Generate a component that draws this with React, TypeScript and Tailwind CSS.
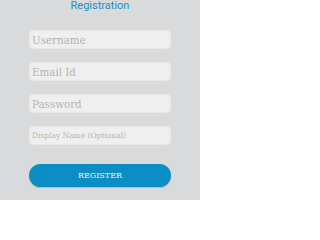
export default function App() {
  const fields = [
    { ph: 'Username', size: 'text-[10.3px]' },
    { ph: 'Email Id', size: 'text-[10.3px]' },
    { ph: 'Password', size: 'text-[10.3px]' },
    { ph: 'Display Name (Optional)', size: 'text-[7.5px]' },
  ]

  return (
    <div className="w-[200px] h-[200px] bg-[#d9dadb] flex flex-col items-center overflow-hidden">
      <h1 className="text-[#1a8fc9] text-[11px] leading-[11px] mt-0 font-['Roboto',sans-serif]">
        Registration
      </h1>

      <div className="flex flex-col gap-[13px] mt-[19px] w-[142px]">
        {fields.map((f) => (
          <input
            key={f.ph}
            type="text"
            placeholder={f.ph}
            className={`h-[19px] w-full rounded-[4px] bg-[#efefef] border border-[#e8e8e8] px-[2px] ${f.size} font-['DejaVu_Serif',serif] placeholder:text-[#b3b3b3] outline-none`}
          />
        ))}
      </div>

      <button className="mt-[19px] w-[142px] h-[23px] rounded-full bg-[#0b8ec4] text-[#eaf5fb] text-[8px] font-['DejaVu_Serif',serif] shadow-[0_1px_1px_rgba(0,0,0,0.15)]">
        REGISTER
      </button>
    </div>
  )
}
